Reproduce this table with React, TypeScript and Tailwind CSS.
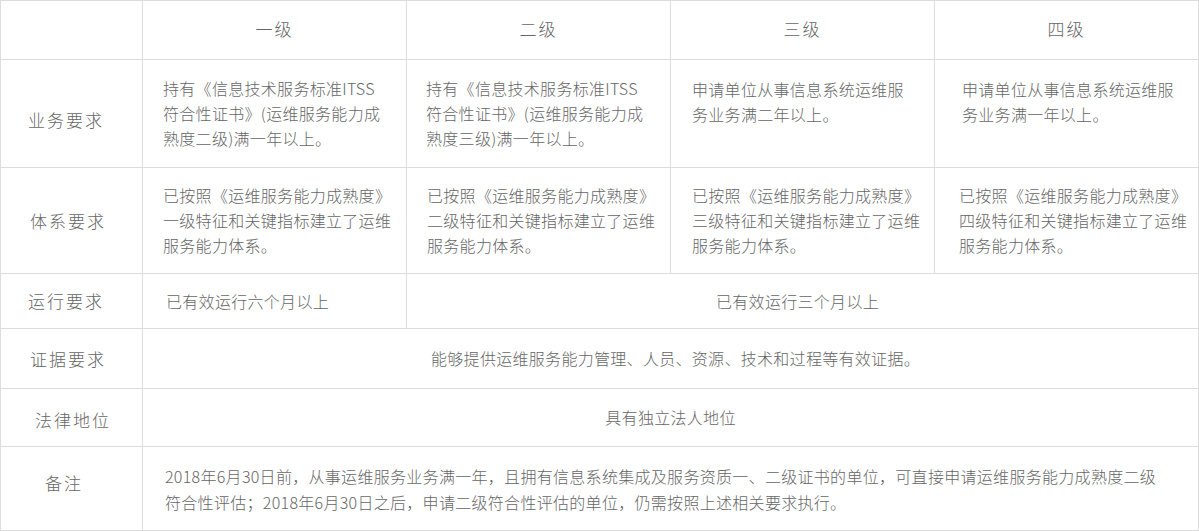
import React from "react";

const font = { fontFamily: '"Noto Sans CJK SC", "Noto Sans", sans-serif' };

function Lines({ lines }: { lines: string[] }) {
  return (
    <div>
      {lines.map((l, i) => (
        <div key={i} className="whitespace-nowrap">
          {l}
        </div>
      ))}
    </div>
  );
}

export default function App() {
  const cell = "bg-white flex items-center text-[16px] leading-[25px] tracking-[0.3px] font-light text-[#666]";
  const label = "bg-white flex items-center text-[17px] tracking-[2px] font-light text-[#666]";
  const head = "bg-white flex items-center justify-center text-[17px] tracking-[2px] font-light text-[#666] pb-[2px]";
  return (
    <div className="w-[1199px] h-[531px] bg-white" style={font}>
      <div className="grid grid-cols-[141px_263px_263px_263px_263px] grid-rows-[58px_107px_105px_54px_59px_57px_83px] gap-px p-px bg-[#dddddd] w-[1199px] h-[531px]">
        {/* header */}
        <div className="bg-white" />
        <div className={head}>一级</div>
        <div className={head}>二级</div>
        <div className={head}>三级</div>
        <div className={head}>四级</div>

        {/* 业务要求 */}
        <div className={`${label} pl-[27px] pt-[13px]`}>业务要求</div>
        <div className={`${cell} pl-[20px]`}>
          <Lines lines={["持有《信息技术服务标准ITSS", "符合性证书》(运维服务能力成", "熟度二级)满一年以上。"]} />
        </div>
        <div className={`${cell} pl-[19px]`}>
          <Lines lines={["持有《信息技术服务标准ITSS", "符合性证书》(运维服务能力成", "熟度三级)满一年以上。"]} />
        </div>
        <div className={`${cell} pl-[21px] items-start pt-[17px]`}>
          <Lines lines={["申请单位从事信息系统运维服", "务业务满二年以上。"]} />
        </div>
        <div className={`${cell} pl-[27px] items-start pt-[17px]`}>
          <Lines lines={["申请单位从事信息系统运维服", "务业务满一年以上。"]} />
        </div>

        {/* 体系要求 */}
        <div className={`${label} pl-[29px]`}>体系要求</div>
        <div className={`${cell} pl-[20px]`}>
          <Lines lines={["已按照《运维服务能力成熟度》", "一级特征和关键指标建立了运维", "服务能力体系。"]} />
        </div>
        <div className={`${cell} pl-[20px]`}>
          <Lines lines={["已按照《运维服务能力成熟度》", "二级特征和关键指标建立了运维", "服务能力体系。"]} />
        </div>
        <div className={`${cell} pl-[21px]`}>
          <Lines lines={["已按照《运维服务能力成熟度》", "三级特征和关键指标建立了运维", "服务能力体系。"]} />
        </div>
        <div className={`${cell} pl-[24px]`}>
          <Lines lines={["已按照《运维服务能力成熟度》", "四级特征和关键指标建立了运维", "服务能力体系。"]} />
        </div>

        {/* 运行要求 */}
        <div className={`${label} pl-[27px]`}>运行要求</div>
        <div className={`${cell} pl-[23px]`}>已有效运行六个月以上</div>
        <div className={`${cell} col-span-3 justify-center pr-[10px]`}>已有效运行三个月以上</div>

        {/* 证据要求 */}
        <div className={`${label} pl-[29px]`}>证据要求</div>
        <div className={`${cell} col-span-4 justify-center pl-[10px]`}>
          能够提供运维服务能力管理、人员、资源、技术和过程等有效证据。
        </div>

        {/* 法律地位 */}
        <div className={`${label} pl-[34px] pt-[5px]`}>法律地位</div>
        <div className={`${cell} col-span-4 justify-center`}>具有独立法人地位</div>

        {/* 备注 */}
        <div className={`${label} pl-[44px] pb-[11px]`}>备注</div>
        <div className={`${cell} col-span-4 pl-[22px] leading-[26px]`}>
          <Lines
            lines={[
              "2018年6月30日前，从事运维服务业务满一年，且拥有信息系统集成及服务资质一、二级证书的单位，可直接申请运维服务能力成熟度二级",
              "符合性评估；2018年6月30日之后，申请二级符合性评估的单位，仍需按照上述相关要求执行。",
            ]}
          />
        </div>
      </div>
    </div>
  );
}
